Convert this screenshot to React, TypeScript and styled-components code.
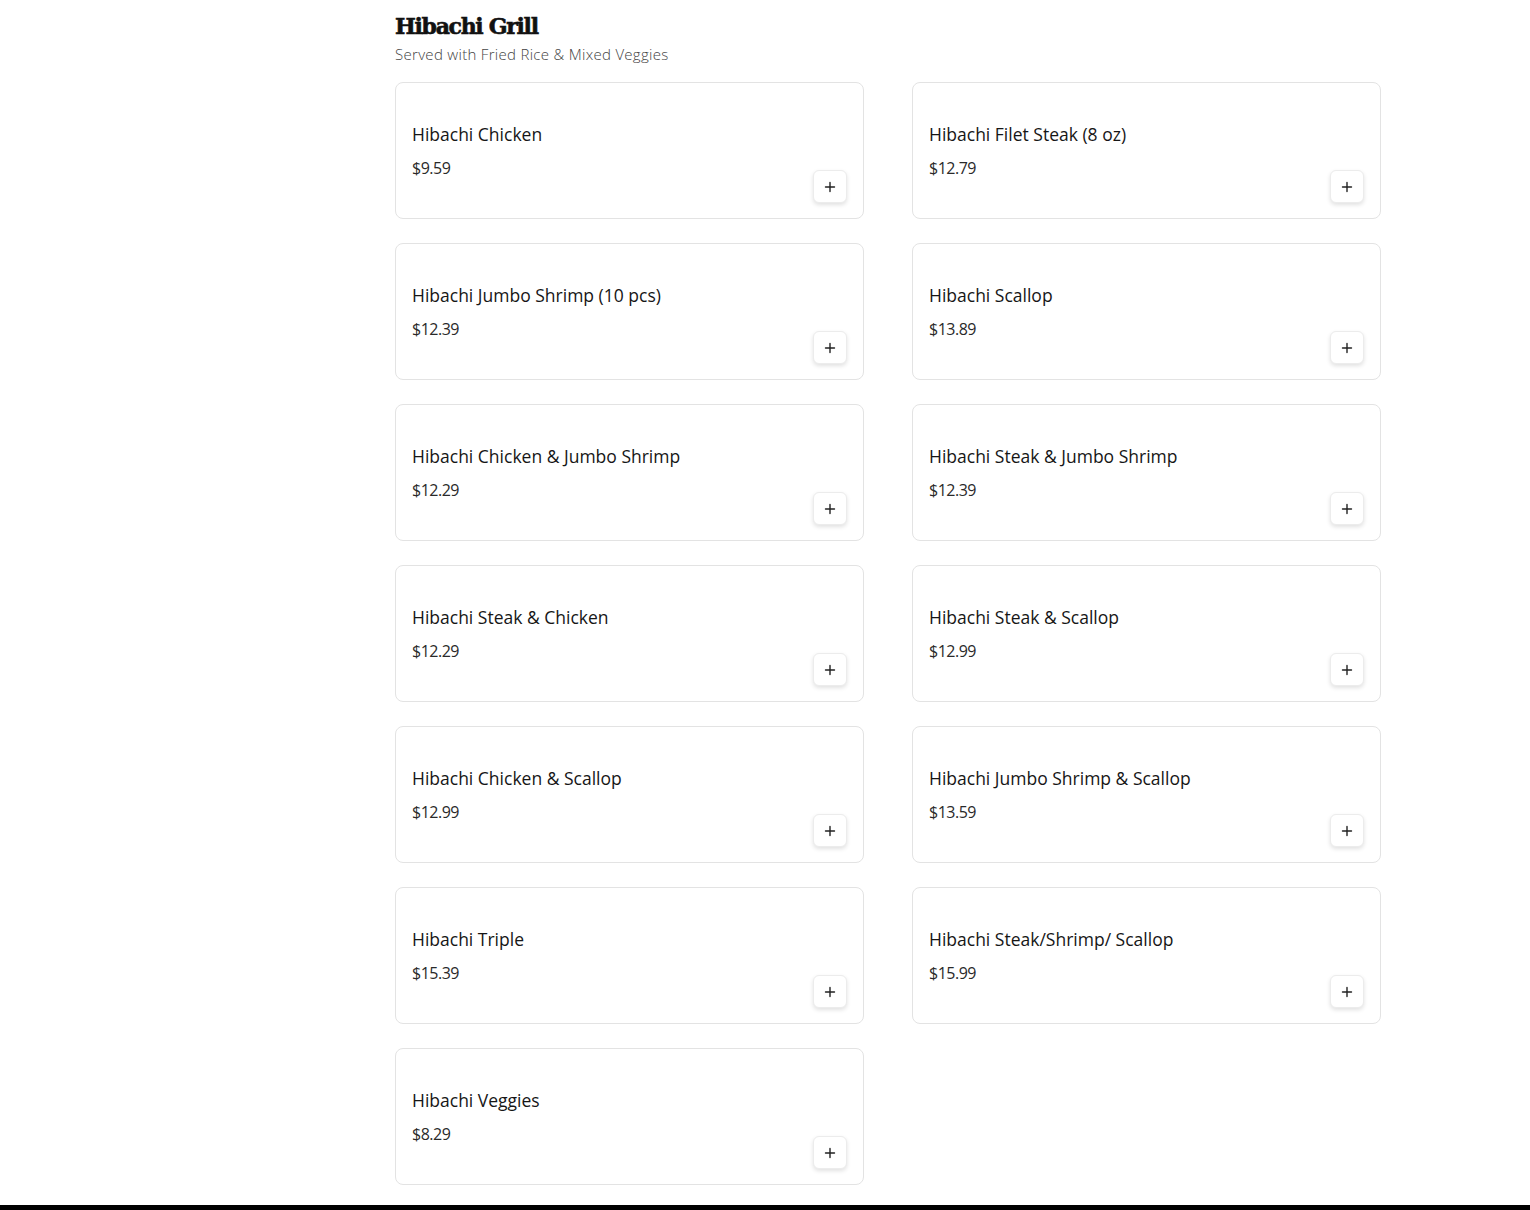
import React from 'react';
import styled, { createGlobalStyle } from 'styled-components';

const GlobalStyle = createGlobalStyle`
  html, body {
    margin: 0;
    padding: 0;
    background: #fff;
  }
  body {
    font-family: 'Open Sans', 'Noto Sans', sans-serif;
    color: #1a1a1a;
  }
`;

const Page = styled.div`
  display: flex;
  flex-direction: column;
  min-height: 100vh;
`;

const Layout = styled.div`
  display: grid;
  grid-template-columns: 270px 1fr;
  width: 1280px;
  margin: 0 auto;
`;

const Sidebar = styled.aside``;

const Section = styled.section`
  padding: 12px 24px 20px 0;
`;

const Header = styled.header`
  margin-bottom: 18px;
`;

const Title = styled.h2`
  font-family: 'DejaVu Serif', 'Liberation Serif', serif;
  font-weight: 900;
  font-size: 22px;
  line-height: 28px;
  letter-spacing: -1.3px;
  color: #111;
  margin: 0;
  -webkit-text-stroke: 0.6px #111;
`;

const Subtitle = styled.p`
  font-family: 'Open Sans', 'Noto Sans', sans-serif;
  font-weight: 300;
  font-size: 15px;
  line-height: 20px;
  letter-spacing: 0.3px;
  color: #444;
  margin: 4px 0 0;
`;

const Grid = styled.div`
  display: grid;
  grid-template-columns: 1fr 1fr;
  column-gap: 48px;
  row-gap: 24px;
`;

const Card = styled.article`
  display: flex;
  justify-content: space-between;
  min-height: 137px;
  box-sizing: border-box;
  padding: 16px 16px 15px;
  border: 1px solid #e3e3e3;
  border-radius: 8px;
  background: #fff;
`;

const Info = styled.div`
  display: flex;
  flex-direction: column;
  gap: 10px;
  padding-top: 23px;
`;

const ItemName = styled.h3`
  font-family: 'Open Sans', 'Noto Sans', sans-serif;
  font-weight: 500;
  font-size: 17.5px;
  line-height: 24px;
  color: #161616;
  margin: 0;
`;

const Price = styled.span`
  font-family: 'Open Sans', 'Noto Sans', sans-serif;
  font-size: 16px;
  line-height: 24px;
  letter-spacing: -0.5px;
  color: #2a2a2a;
`;

const AddButton = styled.button`
  align-self: flex-end;
  width: 34px;
  height: 33px;
  display: flex;
  align-items: center;
  justify-content: center;
  padding: 0;
  border: 1px solid #ececec;
  border-radius: 6px;
  background: #fff;
  box-shadow: 0 2px 4px rgba(0, 0, 0, 0.12);
  cursor: pointer;

  svg {
    width: 12px;
    height: 12px;
  }
`;

const Footer = styled.footer`
  height: 120px;
  background: #000;
`;

const items = [
  { name: 'Hibachi Chicken', price: '$9.59' },
  { name: 'Hibachi Filet Steak (8 oz)', price: '$12.79' },
  { name: 'Hibachi Jumbo Shrimp (10 pcs)', price: '$12.39' },
  { name: 'Hibachi Scallop', price: '$13.89' },
  { name: 'Hibachi Chicken & Jumbo Shrimp', price: '$12.29' },
  { name: 'Hibachi Steak & Jumbo Shrimp', price: '$12.39' },
  { name: 'Hibachi Steak & Chicken', price: '$12.29' },
  { name: 'Hibachi Steak & Scallop', price: '$12.99' },
  { name: 'Hibachi Chicken & Scallop', price: '$12.99' },
  { name: 'Hibachi Jumbo Shrimp & Scallop', price: '$13.59' },
  { name: 'Hibachi Triple', price: '$15.39' },
  { name: 'Hibachi Steak/Shrimp/ Scallop', price: '$15.99' },
  { name: 'Hibachi Veggies', price: '$8.29' },
];

const PlusIcon = () => (
  <svg viewBox="0 0 12 12" fill="none" stroke="#222" strokeWidth={1.4} strokeLinecap="round">
    <path d="M6 1.5v9M1.5 6h9" />
  </svg>
);

const App: React.FC = () => {
  return (
    <Page>
      <GlobalStyle />
      <Layout>
        <Sidebar />
        <Section>
          <Header>
            <Title>Hibachi Grill</Title>
            <Subtitle>Served with Fried Rice &amp; Mixed Veggies</Subtitle>
          </Header>
          <Grid>
            {items.map((item) => (
              <Card key={item.name}>
                <Info>
                  <ItemName>{item.name}</ItemName>
                  <Price>{item.price}</Price>
                </Info>
                <AddButton aria-label={`Add ${item.name}`}>
                  <PlusIcon />
                </AddButton>
              </Card>
            ))}
          </Grid>
        </Section>
      </Layout>
      <Footer />
    </Page>
  );
};

export default App;
